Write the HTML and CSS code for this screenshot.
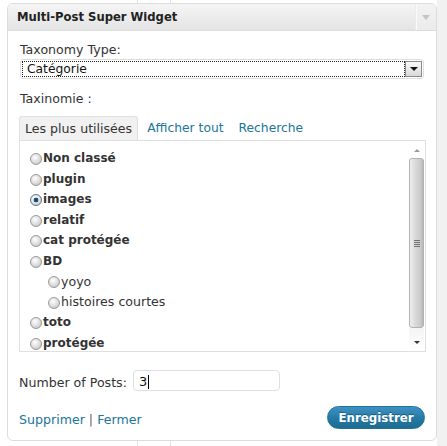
FILE: index.html
```html
<!DOCTYPE html>
<html lang="fr">
<head>
<meta charset="utf-8">
<title>Multi-Post Super Widget</title>
<link rel="stylesheet" href="styles.css">
</head>
<body>
<div class="widget">
  <div class="widget-top">
    <h3 class="widget-title">Multi-Post Super Widget</h3>
    <div class="widget-action"><span class="tri"></span></div>
  </div>
  <div class="widget-inside">
    <div class="field-label">Taxonomy Type:</div>
    <div class="select">
      <div class="select-focus">Catégorie</div>
      <div class="select-btn"><span class="tri-down"></span></div>
    </div>
    <div class="field-label tax-label">Taxinomie :</div>
    <ul class="tabs">
      <li class="tab active">Les plus utilisées</li>
      <li class="tab">Afficher tout</li>
      <li class="tab">Recherche</li>
    </ul>
    <div class="checklist">
      <ul class="terms">
        <li class="term"><span class="radio"></span><b>Non classé</b></li>
        <li class="term"><span class="radio"></span><b>plugin</b></li>
        <li class="term"><span class="radio checked"></span><b>images</b></li>
        <li class="term"><span class="radio"></span><b>relatif</b></li>
        <li class="term"><span class="radio"></span><b>cat protégée</b></li>
        <li class="term"><span class="radio"></span><b>BD</b></li>
        <li class="term child"><span class="radio"></span>yoyo</li>
        <li class="term child"><span class="radio"></span>histoires courtes</li>
        <li class="term"><span class="radio"></span><b>toto</b></li>
        <li class="term"><span class="radio"></span><b>protégée</b></li>
      </ul>
      <div class="scrollbar">
        <div class="sb-up"><span class="tri-up"></span></div>
        <div class="sb-thumb"><span class="grip"></span></div>
        <div class="sb-down"><span class="tri-down small"></span></div>
      </div>
    </div>
    <div class="num-row">
      <span class="num-label">Number of Posts:</span>
      <div class="num-input"><span class="num-val">3</span><span class="caret"></span></div>
    </div>
    <div class="widget-control">
      <div class="links"><a class="lnk">Supprimer</a> <span class="sep">|</span> <a class="lnk">Fermer</a></div>
      <button class="save-btn">Enregistrer</button>
    </div>
  </div>
</div>
</body>
</html>
```
FILE: styles.css
```css
html, body {
  margin: 0;
  padding: 0;
}
body {
  width: 447px;
  height: 446px;
  overflow: hidden;
  font-family: "DejaVu Sans", Verdana, sans-serif;
  font-size: 12.6px;
  color: #333;
  background:
    linear-gradient(to right, transparent 137px, #e2e2e2 137px, #e2e2e2 138px, transparent 138px),
    linear-gradient(to right, transparent 170px, #e2e2e2 170px, #e2e2e2 171px, transparent 171px),
    linear-gradient(to right, #ffffff 437px, #f1f1f1 437px);
  padding-top: 3px;
  box-sizing: border-box;
}
.widget {
  margin-left: 7px;
  width: 430px;
  box-sizing: border-box;
  border: 1px solid #dcdcdc;
  border-radius: 6px;
  background: #fff;
  height: 438px;
  display: flex;
  flex-direction: column;
}
.widget-top {
  height: 26px;
  border-bottom: 1px solid #dcdcdc;
  border-radius: 5px 5px 0 0;
  background: linear-gradient(#f5f5f5, #e4e4e4);
  display: flex;
  align-items: center;
}
.widget-title {
  margin: 0;
  flex: 1;
  padding-left: 9px;
  font-size: 11.6px;
  font-weight: bold;
  color: #222;
  line-height: 26px;
}
.widget-action {
  width: 20px;
  height: 26px;
  border-left: 1px solid #ececec;
  box-shadow: inset 1px 0 0 #fafafa;
  background: linear-gradient(#f3f3f3, #ebebeb);
  border-top-right-radius: 5px;
  display: flex;
  align-items: center;
  justify-content: center;
}
.tri {
  width: 0;
  height: 0;
  border-left: 4px solid transparent;
  border-right: 4px solid transparent;
  border-top: 5px solid #c4c4c4;
}
.widget-inside {
  flex: 1;
  padding: 11px 10px 0 11px;
  display: flex;
  flex-direction: column;
}
.field-label {
  line-height: 16px;
  padding-left: 1px;
  color: #333;
}
.select {
  margin: 1px 2px 0 1px;
  height: 20px;
  box-sizing: border-box;
  border: 1px solid #dedede;
  border-radius: 3px;
  display: flex;
  align-items: center;
  padding: 0 1px 0 1px;
  background: #fff;
}
.select-focus {
  flex: 1;
  height: 16px;
  box-sizing: border-box;
  border: 1px dotted #222;
  line-height: 14px;
  padding-left: 4px;
  color: #111;
  font-size: 12.3px;
}
.select-btn {
  width: 17px;
  height: 16px;
  box-sizing: border-box;
  border: 1px solid #8a8a8a;
  background: linear-gradient(#fafafa, #d8d8d8);
  display: flex;
  align-items: center;
  justify-content: center;
}
.tri-down {
  width: 0;
  height: 0;
  border-left: 4px solid transparent;
  border-right: 4px solid transparent;
  border-top: 4px solid #111;
}
.tri-down.small {
  border-left-width: 3px;
  border-right-width: 3px;
  border-top: 3px solid #333;
}
.tax-label {
  margin-top: 12px;
}
.tabs {
  list-style: none;
  margin: 9px 0 0 0;
  padding: 0;
  display: flex;
  font-size: 12.3px;
}
.tab {
  padding: 0 6px;
  margin-right: 3px;
  height: 24px;
  line-height: 25px;
  color: #21759b;
  box-sizing: border-box;
}
.tab.active {
  color: #333;
  background: #f1f1f1;
  border: 1px solid #dfdfdf;
  border-bottom: none;
  border-radius: 3px 3px 0 0;
  line-height: 24px;
  padding: 0 5px;
  font-size: 12.6px;
}
.checklist {
  height: 212px;
  box-sizing: border-box;
  border: 1px solid #dfdfdf;
  display: flex;
  background: #fff;
}
.terms {
  list-style: none;
  margin: 0;
  padding: 7px 0 0 10px;
  flex: 1;
}
.term {
  height: 20.5px;
  display: flex;
  align-items: center;
  color: #333;
}
.term b {
  font-weight: bold;
  color: #333;
  font-size: 12px;
}
.term.child {
  padding-left: 18px;
}
.radio {
  width: 12px;
  height: 12px;
  box-sizing: border-box;
  border: 1px solid #9a9a9a;
  border-radius: 50%;
  background: radial-gradient(circle at 40% 35%, #ffffff 0, #e8e8e8 35%, #bdbdbd 100%);
  margin-right: 1px;
  margin-top: 2px;
  flex: none;
}
.radio.checked {
  border-color: #5f7282;
  background:
    radial-gradient(circle at 50% 50%, #163f5c 0, #245a80 30%, rgba(255,255,255,0) 38%),
    radial-gradient(circle at 40% 35%, #ffffff 0, #e6eaee 40%, #b9c2ca 100%);
}
.scrollbar {
  width: 15px;
  margin: 1px 1px 0 0;
  display: flex;
  flex-direction: column;
}
.sb-up {
  height: 16px;
  display: flex;
  align-items: center;
  justify-content: center;
}
.tri-up {
  width: 0;
  height: 0;
  border-left: 3px solid transparent;
  border-right: 3px solid transparent;
  border-bottom: 3px solid #9a9a9a;
}
.sb-thumb {
  height: 170px;
  box-sizing: border-box;
  border: 1px solid #b2b2b2;
  border-radius: 3px;
  background: linear-gradient(to right, #eeeeee, #dadada 40%, #cbcbcb 80%, #b8b8b8);
  display: flex;
  align-items: center;
  justify-content: center;
}
.grip {
  width: 6px;
  height: 7px;
  background: repeating-linear-gradient(#6f6f6f 0, #6f6f6f 1px, transparent 1px, transparent 2px);
}
.sb-down {
  flex: 1;
  display: flex;
  align-items: flex-end;
  justify-content: center;
  padding-bottom: 7px;
  background: linear-gradient(#f4f4f4, #ffffff);
}
.num-row {
  margin-top: 18px;
  display: flex;
  align-items: center;
}
.num-label {
  padding-top: 4px;
  margin-right: 6px;
}
.num-input {
  width: 147px;
  height: 21px;
  box-sizing: border-box;
  border: 1px solid #dfdfdf;
  border-radius: 4px;
  display: flex;
  align-items: center;
  padding-left: 5px;
  padding-top: 2px;
  color: #111;
  font-size: 13px;
}
.caret {
  width: 1px;
  height: 14px;
  background: #000;
  margin-left: 1px;
}
.widget-control {
  margin-top: 15px;
  display: flex;
  align-items: center;
  justify-content: space-between;
}
.links {
  padding-top: 4px;
  color: #555;
}
.lnk {
  color: #21759b;
  text-decoration: none;
}
.sep {
  color: #666;
}
.save-btn {
  width: 98px;
  height: 23px;
  margin-right: 1px;
  border: 1px solid #24729b;
  border-radius: 12px;
  background: linear-gradient(#3d92c3, #2479a3 55%, #1f6b91);
  color: #fff;
  font-family: "DejaVu Sans", Verdana, sans-serif;
  font-size: 11.8px;
  font-weight: bold;
  text-shadow: 0 -1px 0 rgba(0,0,0,0.3);
  padding: 0;
}
```
